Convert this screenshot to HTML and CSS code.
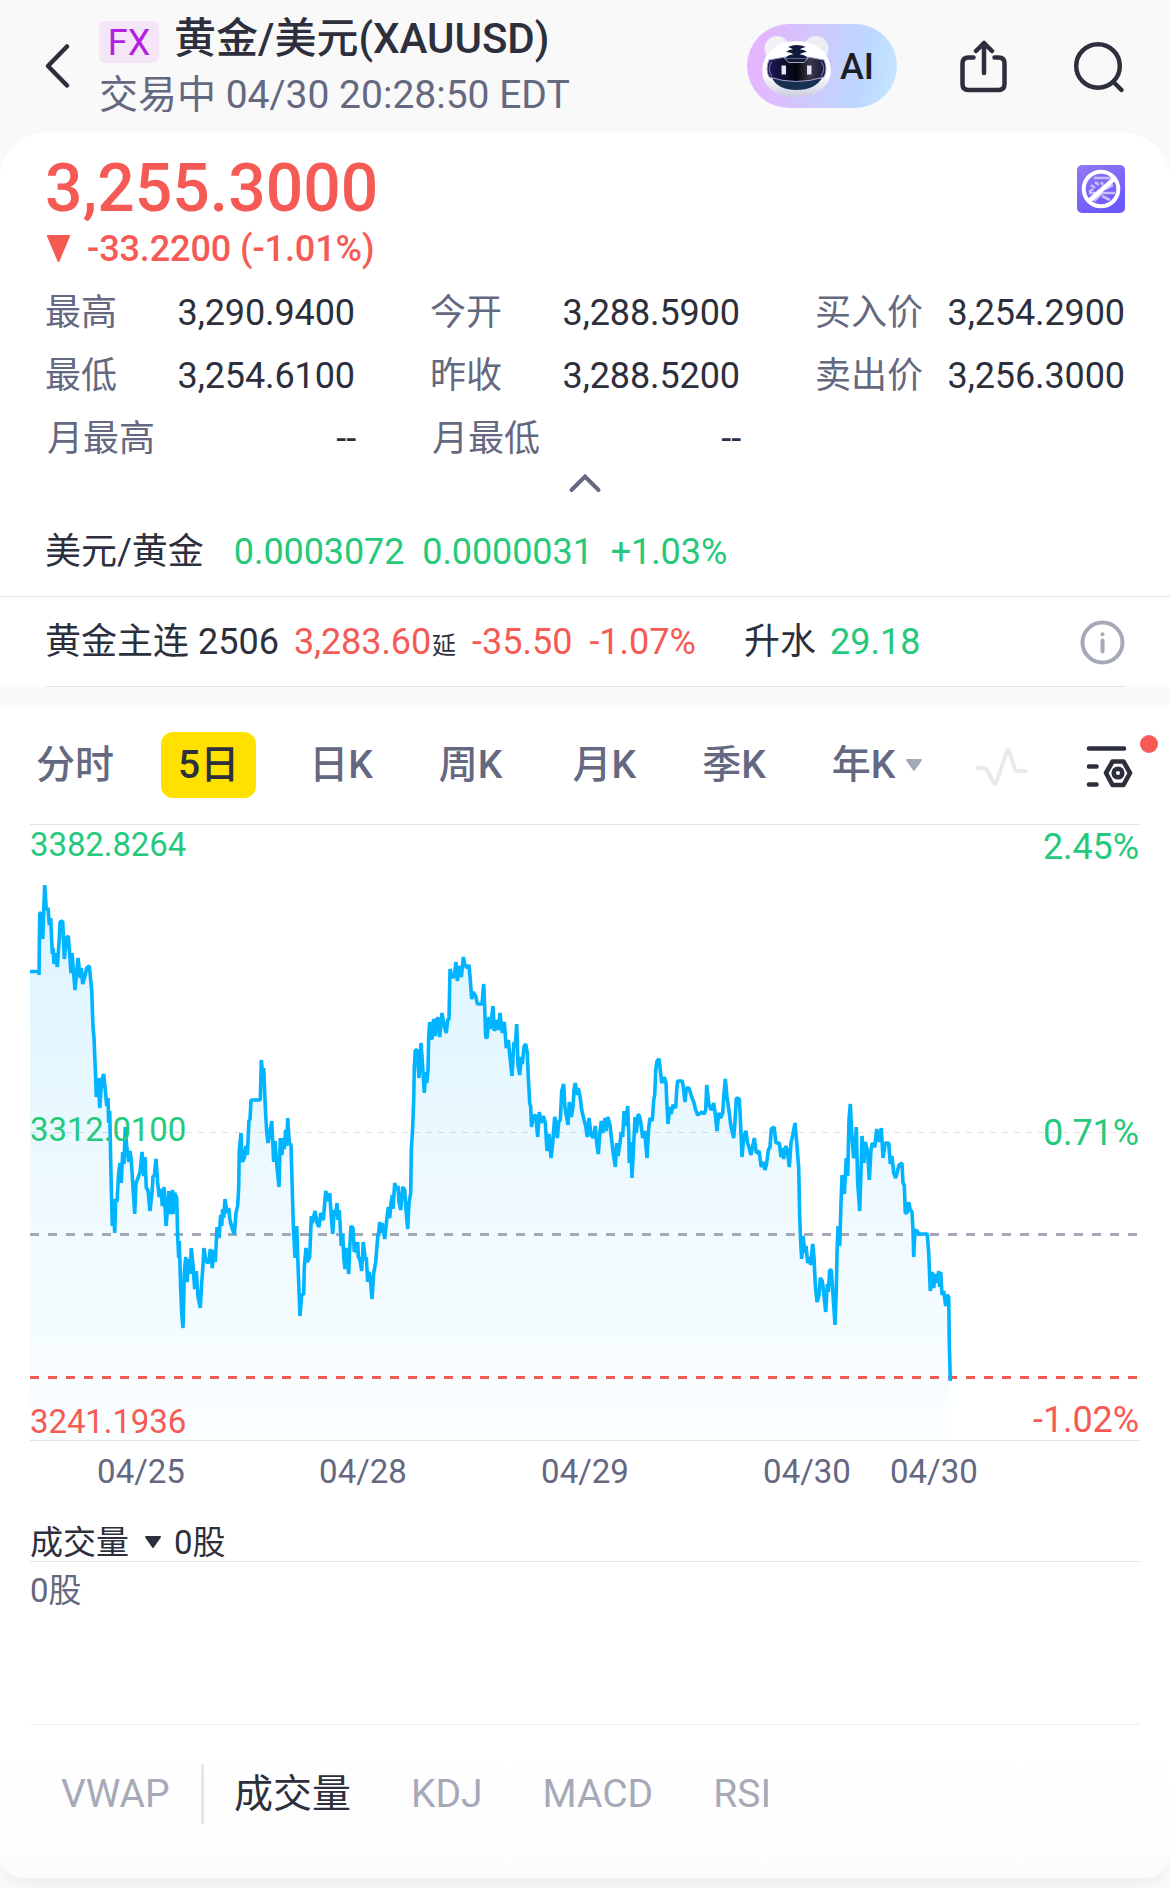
FILE: index.html
```html
<!DOCTYPE html>
<html lang="zh-CN">
<head>
  <meta charset="UTF-8"/>
  <title>黄金/美元(XAUUSD)</title>
  <link rel="stylesheet" href="styles.css">
</head>
<body>

  <!-- HEADER -->
  <div class="header">
    <svg class="back" width="30" height="50" viewBox="0 0 30 50"><path d="M25 5.500L6 25L25 44.500"/></svg>
    <div class="heading">
      <div class="title"><span class="tag">FX</span><h1>黄金/美元(XAUUSD)</h1></div>
      <div class="status">交易中 04/30 20:28:50 EDT</div>
    </div>
    <div class="ai">
      <svg width="94" height="84" viewBox="0 0 94 84">
        <defs>
          <linearGradient id="fur" x1="0" y1="0" x2="0" y2="1">
            <stop offset="0.6" stop-color="#fff"/>
            <stop offset="1" stop-color="#c9cbe0"/>
          </linearGradient>
          <linearGradient id="visor" x1="0" y1="0" x2="1" y2="0">
            <stop offset="0" stop-color="#1e1b5a"/>
            <stop offset="0.5" stop-color="#05050f"/>
            <stop offset="0.72" stop-color="#3a3a48"/>
            <stop offset="1" stop-color="#14123c"/>
          </linearGradient>
        </defs>
        <circle cx="30" cy="24.500" r="12.500" fill="#f2f1f5"/>
        <circle cx="69" cy="24.500" r="12.500" fill="#eeedf2"/>
        <path d="M49.500 17C69 17 83.700 29 83.700 47C83.700 64 68 73.500 49.500 73.500S15.300 64 15.300 47C15.300 29 30 17 49.500 17Z" fill="url(#fur)"/>
        <path d="M25 54Q49.500 59 75 54Q68 66 49.500 66T25 54Z" fill="#17304f"/>
        <path d="M22 36Q49.500 29 77 36Q81 45 77 53Q49.500 62 22 53Q18 45 22 36Z" fill="url(#visor)" stroke="#a9a0d0" stroke-width="1"/>
        <path d="M24.500 38Q20 45 24.500 51.500M74.500 38Q79 45 74.500 51.500" fill="none" stroke="#7775a8" stroke-width="1.200"/>
        <path d="M38 34L61 34L57 38.500H42Z" fill="#101b3c" stroke="#cfcbea" stroke-width="0.800"/>
        <path d="M41 23Q49.500 19 59 23Q54 24 53 25.500Q57 25 60 28Q54 28.500 53 30.500Q58 30.500 60.500 34H38.500Q41 30.500 46 30.500Q45 28.500 39 28Q42 25 46 25.500Q45 24 41 23Z" fill="#101b3c"/>
        <path d="M34.500 41.500h4.500v9h-4.500zM60 41.500h4.500v9h-4.500z" fill="#e6e6ee"/>
      </svg>
      <span>AI</span>
    </div>
    <svg class="share" width="50" height="54" viewBox="0 0 50 54"><path d="M14.500 17.500H9.500Q3.500 17.500 3.500 23.500V44Q3.500 50 9.500 50H39.500Q45.500 50 45.500 44V23.500Q45.500 17.500 39.500 17.500H35.500M25 33V3M17 11L25 3L33 11"/></svg>
    <svg class="search" width="54" height="54" viewBox="0 0 54 54"><circle cx="25" cy="26" r="21.800"/><path d="M41 42.500L48.500 50"/></svg>
  </div>

  <!-- QUOTE -->
  <div class="quote">
    <div class="price-row">
      <div class="price">3,255.3000</div>
      <svg class="badge" width="48" height="48" viewBox="0 0 48 48">
        <defs>
          <linearGradient id="badge" x1="0" y1="0" x2="0.500" y2="1">
            <stop offset="0" stop-color="#9479f3"/>
            <stop offset="1" stop-color="#6a59fb"/>
          </linearGradient>
        </defs>
        <rect width="48" height="48" rx="5" fill="url(#badge)"/>
        <path d="M17 13H34M14 20L18 23M18 17L22 20M12 27L16 24M24 17L26 20M12 28H38M25 28L17 36M25 31L33 35M28 24L36 20" fill="none" stroke="#cbbdfb" stroke-width="2.600"/>
        <circle cx="24" cy="24" r="17.300" fill="none" stroke="#fff" stroke-width="4"/>
        <path d="M12 36L37 14" stroke="#fff" stroke-width="4.500"/>
      </svg>
    </div>
    <div class="change"><svg width="25" height="28" viewBox="0 0 25 28"><path d="M2 1H23L12.500 26Z" fill="#f55a55" stroke="#f55a55" stroke-width="2" stroke-linejoin="round"/></svg>-33.2200 (-1.01%)</div>
    <div class="stats">
      <div><span>最高</span><b>3,290.9400</b></div>
      <div><span>今开</span><b>3,288.5900</b></div>
      <div><span>买入价</span><b>3,254.2900</b></div>
      <div><span>最低</span><b>3,254.6100</b></div>
      <div><span>昨收</span><b>3,288.5200</b></div>
      <div><span>卖出价</span><b>3,256.3000</b></div>
      <div class="month"><span>月最高</span><b>--</b></div>
      <div class="month"><span>月最低</span><b>--</b></div>
    </div>
    <svg class="fold" width="36" height="36" viewBox="0 0 36 36"><path d="M4.500 19L18 5.500L31.500 19"/></svg>
  </div>

  <!-- RELATED QUOTES -->
  <div class="related inverse">
    <span class="name">美元/黄金</span>
    <span class="up">0.0003072</span>
    <span class="up">0.0000031</span>
    <span class="up">+1.03%</span>
  </div>
  <div class="related futures">
    <span>黄金主连 2506</span>
    <span class="down last">3,283.60</span><small>延</small>
    <span class="down">-35.50</span>
    <span class="down pct">-1.07%</span>
    <span class="basis">升水</span>
    <span class="up">29.18</span>
    <svg class="info" width="46" height="46" viewBox="0 0 46 46"><circle cx="23.500" cy="23.500" r="20"/><path d="M23.500 21.500V32.500"/><path d="M23.500 15.200V15.300"/></svg>
  </div>

  <!-- CHART -->
  <div class="panel">
    <div class="tabs">
      <span>分时</span>
      <span class="active">5日</span>
      <span>日K</span>
      <span>周K</span>
      <span class="month">月K</span>
      <span>季K</span>
      <span class="year">年K</span>
      <svg class="caret" width="18" height="14" viewBox="0 0 18 14"><path d="M2 2H16L9 12Z"/></svg>
      <svg class="pulse" width="56" height="44" viewBox="0 0 56 44"><path d="M4 23H10Q12 23 13.500 26L20 38Q21 40 22 38L33 6Q34 4 35 6L41 24Q42 26 44 26H52"/></svg>
      <svg class="settings" width="52" height="48" viewBox="0 0 52 48"><path d="M5 5.500H40M5 23.500H12.500M5 41.500H12.500"/><path d="M28.500 18.500H39.500L46 30L39.500 42H28.500L22 30Z"/><circle cx="34" cy="30" r="4.300"/></svg>
      <i class="dot"></i>
    </div>

    <div class="chart">
      <svg width="1110" height="617" viewBox="0 0 1110 617">
        <defs>
          <linearGradient id="area" gradientUnits="userSpaceOnUse" x1="0" y1="60" x2="0" y2="616">
            <stop offset="0" stop-color="#dcf4ff"/>
            <stop offset="0.62" stop-color="#f0faff"/>
            <stop offset="1" stop-color="#fafeff"/>
          </linearGradient>
        </defs>
        <polygon id="fill" fill="url(#area)"/>
        <path d="M0 308.500H1110" stroke="#000" stroke-opacity="0.120" stroke-dasharray="6 6"/>
        <path d="M0 410.500H1110" stroke="#a4a9b8" stroke-width="3" stroke-dasharray="9 9"/>
        <path d="M0 553.500H1110" stroke="#f55a55" stroke-width="3" stroke-dasharray="9 9"/>
        <polyline id="line" fill="none" stroke="#00b4ff" stroke-width="3.600" stroke-linejoin="bevel" points="
          0,147.500 9,147.500 9,151 9.700,89 10.700,89 12.700,115 14.700,61 16.300,86 18,84 19.300,101 20.700,94 22.300,130 23,124 24,140 25.700,129 27.300,143 29.300,114 30,98 32.700,97 34.300,135 36.300,114 38.300,112 41,149 42,129 45,166 48,134 50.300,154 51.300,144 52.700,160 54.700,153 56.700,144 59.300,142 61.700,166 63,203 64,214 65.700,254 66.300,273 68.300,254 69.700,284 71.700,256 73.700,250 75.300,266 76.700,282 78,274 78.700,299 79.700,287 80.700,336 81.300,364 82.300,402 83.300,375 84.700,409 85.700,375 87,378 88.700,348 90,339 91.300,359 92.700,328 94,340 95.300,303 96.700,322 98.700,338 100,327 101.300,336 103,364 104.700,390 106,359 108,354 110,348 112,328 113.700,352 115,333 116.300,364 118,366 120,387 122,369 123,352 124.300,352 126,335 127.700,359 129.300,373 131,365 132.300,382 134,363 136,402 137.700,383 138.700,367 140.700,390 142.700,366 143,390 144.700,369 146.700,374 147.700,413 148.700,434 149.300,417 150.700,466 151.700,489 153,504 154.300,449 155.700,433 157,458 158.700,435 160,450 161.300,424 163,441 164.700,465 166.300,447 168,473 170.300,484 171.700,459 173,441 174,424 175.700,436 177.700,439 179,437 180.300,425 182.300,444 183.700,426 185.300,438 187,403 189,414 190.700,391 191.700,402 192.700,385 193.700,394 195,375 197,389 198.700,384 200,396 202,404 204.300,410 206,389 207.700,381 208.700,363 209.300,326 211,309 212.300,338 214.300,334 216,322 217.300,331 219,296 220,296 221,276 230.300,276 231.300,236 233,253 233.700,244 235.300,283 236.700,308 238,319 240,308 241.700,297 243.700,338 245,317 247,343 249,363 250.300,314 252,331 253,314 254.300,325 255.700,306 256.700,322 257.700,294 259.300,319 261,321 262,356 263.300,401 265,434 266.700,402 268.300,449 270,492 271.700,471 273.700,470 274.300,443 276,424 277.300,438 279.700,433
          281.300,392 282.300,399 285,387 287,399 289,403 290.700,389 293.300,396 295.700,367 298,377 299.700,369 301,388 302.700,410 304.300,386 305.700,391 307,379 308,396 309.300,386 311.300,422 312.700,410 313.700,433 315,445 316.700,424 318.700,450 319.700,424 321,402 323,404 324.300,428 325.700,418 326.500,429 327.700,418 328.300,433 329.700,435 331.700,447 333.300,418 335.300,436 336.300,433 337.700,458 339,448 340.300,454 342,475 343.700,449 345.700,438 347.700,413 348.700,408 349.700,398 350.700,409 352,399 354.700,415 356.700,396 358.300,383 359.700,394 361,379 362.300,371 363,385 364.700,359 366.300,366 368,362 369,378 370.700,386 372.700,363 374.700,366 376,386 377.700,405 379,379 380.700,369 381.300,326 382.700,303 383.700,276 384.300,243 385.300,226 387,226 389,254 391,219 392.700,243 394.300,269 395.700,248 396.700,259 398,246 398.700,213 399.700,198 401,214 402,215 403.700,195 405.300,212 406.700,195 408.300,194 409.700,213 412,189 414,201 416.300,209 417.700,196 419,195 420,145 422,153 424.300,153 426,138 427.300,157 429.300,142 431.300,153 433.300,133 434.700,140 436.700,144 439,141 440.300,156 441.700,175 443.300,168 446,173 447.300,180 452,180 453.700,160 454.700,183 455.700,213 457,214 459,193 460.300,205 463,182 464.300,207 466.700,196 468.300,206 470,189 472.300,209 474.300,198 476.300,224 478.300,216 480,233 482,252 484,218 485.300,221 486.700,200 488,241 489.700,251 491.300,233 492.300,240 494,223 495.700,220 497.300,229 498.300,253 499.700,279 500.700,283
          501.500,303 503.300,293 505.700,291 507.700,313 509.300,288 511,299 513.300,292 515.300,299 517,327 519,310 521,334 522.700,319 524.700,293 526,299 527.300,314 528.700,298 530.300,296 531.700,267 533.700,260 535,284 538,301 539.300,278 541.300,293 543,283 544,266 545.300,259 547,271 548.300,264 550.300,274 551.700,286 554,296 555.700,302 557.300,313 559,294 561,311 563.300,314 565.300,302 566.700,319 568.300,330 570,308 571.300,297 573,309 575,294 576,307 577.700,293 580,301 581.300,313 583.300,330 585.300,343 586.700,319 588,332 590,319 591.300,308 592.700,313 594,287 595.300,302 597.700,282 598.700,309 599.300,339 600.700,318 602,354 603.300,328 605,293 606.300,309 608,291 609.300,291 610.700,298 612.700,314 614.700,307 617,334 618.700,304 620,294 622.300,297 623.700,276 624.700,271 625.700,246 627,237 629,235 630.300,246 631.700,259 634.300,253 636,259 636.700,276 638,300 639.700,283 641,290 643,281 645.700,284 646.700,266 647.700,257 652.300,257 653.300,263 655,278 656.300,264 659,264 661.700,273 663.700,278 665.700,286 667.700,291 672,288 674.300,290 675.700,286 676.700,261 679,281 681.300,286 683.700,279 685,288 687,307 688.700,289 690.700,294 692.700,289 693.700,273 695.300,255 697,273 699.300,289 700.700,301 703.700,314 705.300,293 706.300,274 709.300,275 710.300,293 712,333 713.700,313 716,307 717.300,318 719,323 721,331 724.300,314 726.300,329 729,327 731.300,343 733.300,338 735,346 736.700,339 738.300,326 740,323 741.300,305 744,303 746,319 749.300,319 751,333 752,324 753.700,335 755.700,322 757.300,326 759.300,343 761,319 762.700,311
          765,299 766.700,318 768.700,344 769.700,393 770.700,419 771.700,435 773,412 775,429 776,422 777.700,439 779.300,433 780.700,441 782.700,420 784,433 785.300,461 787,478 789,471 790.300,454 792.300,457 794,471 795.700,488 797.300,460 798.300,468 799.700,446 801.300,446 803,471 805,501 806.300,466 807,429 808,402 809.700,422 811,379 812,351 814.300,370 816.300,334 817.700,352 819,296 820.300,280 822,313 823.700,334 825,328 826.300,303 827.700,359 829.700,387 831,346 832,312 834,339 835.300,318 837.700,328 839.300,356 841,326 842.300,319 844.700,323 846.700,305 848.700,318 851.300,304 853,334 855.300,319 858.700,319 860.300,340 862,332 863.700,349 865.700,354 869,341 872,339 873,359 874.300,361 875.300,389 877,389 878.700,378 880.300,386 882,388 883,406 883.700,433 885,406 887,407 888.700,410 897.300,410 898.700,429 900.300,467 902.300,448 903.700,464 905.300,450 907,459 908.700,447 909.700,463 910.700,448 912,471 913.700,467 915.700,482 917,471 918.700,473 919.300,519 920.300,557"/>
      </svg>
      <span class="label top up">3382.8264</span>
      <span class="label mid up">3312.0100</span>
      <span class="label bottom down">3241.1936</span>
      <span class="label pct top up">2.45%</span>
      <span class="label pct mid up">0.71%</span>
      <span class="label pct bottom down">-1.02%</span>
    </div>
    <div class="dates">
      <span>04/25</span><span>04/28</span><span>04/29</span><span>04/30</span><span>04/30</span>
    </div>

    <!-- VOLUME -->
    <div class="volume-head">成交量<svg width="18" height="14" viewBox="0 0 18 14"><path d="M2 2H16L9 12Z"/></svg>0股</div>
    <div class="volume">0股</div>

    <div class="indicators">
      <span class="vwap">VWAP</span>
      <span class="selected">成交量</span>
      <span>KDJ</span>
      <span>MACD</span>
      <span>RSI</span>
    </div>
  </div>

  <script>
    // close the price line down to the bottom axis to get the shaded area
    const pts = document.getElementById('line').getAttribute('points').trim();
    document.getElementById('fill').setAttribute('points', pts + ' 920.3,616 0,616');
  </script>
</body>
</html>
```

FILE: styles.css
```css
/* GLOBAL STYLES */
* {
  margin: 0;
  padding: 0;
  box-sizing: border-box;
}
body {
  width: 1170px;
  height: 1888px;
  overflow: hidden;
  font-family: Roboto, "Noto Sans CJK SC", sans-serif;
  font-size: 36px;
  color: #2d2f3d;
  background: #f9f9f9;
}
svg {
  display: block;
  flex-shrink: 0;
}
.up {
  color: #26c97c;
}
.down {
  color: #f55a55;
}
/* HEADER */
.header {
  display: flex;
  height: 132px;
  padding: 11px 43px 0 42px;
}
.header svg {
  fill: none;
  stroke: #2d2f3d;
  stroke-width: 4.5;
  stroke-linecap: round;
  stroke-linejoin: round;
}
.header .back {
  margin-top: 30px;
}
.heading {
  margin-left: 27px;
  width: 648px;
}
.title {
  display: flex;
  line-height: 56px;
}
.title h1 {
  font-size: 42px;
  font-weight: 500;
}
.tag {
  width: 60px;
  height: 42px;
  margin: 10px 15px 0 0;
  border-radius: 6px;
  background: #f4e6f6;
  color: #b31ee3;
  line-height: 45px;
  text-align: center;
}
.status {
  font-size: 39px;
  line-height: 56px;
  color: #646880;
}
.ai {
  display: flex;
  width: 150px;
  height: 84px;
  margin-top: 13px;
  border-radius: 42px;
  background: linear-gradient(100deg, #e3b6ff 12%, #d0c8fd 42%, #bcd7ff 75%, #c6e9ff 100%);
  color: #1d1e24;
  font-weight: 500;
  line-height: 86px;
}
.header .ai svg {
  margin-right: -1px;
  stroke: none;
}
.header .share {
  margin: 29px 0 0 62px;
}
.header .search {
  margin: 29px 0 0 64px;
}
/* QUOTE */
.quote {
  height: 374px;
  padding: 18px 45px 0;
  border-radius: 48px 48px 0 0;
  background: #fff;
}
.price-row {
  display: flex;
  justify-content: space-between;
  height: 76px;
}
.price {
  font-size: 66px;
  font-weight: 500;
  line-height: 78px;
  color: #f55a55;
}
.badge {
  margin-top: 15px;
}
.change {
  display: flex;
  align-items: center;
  gap: 16px;
  height: 46px;
  padding-left: 1px;
  font-weight: 500;
  line-height: 46px;
  letter-spacing: -0.1px;
  color: #f55a55;
}
.stats {
  display: grid;
  grid-template-columns: repeat(3, 310px);
  column-gap: 75px;
  margin-top: 10px;
  line-height: 63px;
}
.stats div {
  display: flex;
  justify-content: space-between;
}
.stats span {
  color: #646880;
}
.stats b {
  font-weight: 400;
  letter-spacing: -0.1px;
}
.stats .month {
  margin: 0 -1px 0 2px;
}
.fold {
  margin: 0 auto;
  fill: none;
  stroke: #646880;
  stroke-width: 4;
  stroke-linecap: round;
}
/* RELATED QUOTES */
.related {
  display: flex;
  height: 90px;
  padding: 0 45px;
  background: #fff;
  line-height: 90px;
}
.inverse {
  height: 91px;
  border-bottom: 1px solid #e3e4e7;
  gap: 18px;
  line-height: 92px;
}
.inverse .name {
  margin-right: 12px;
}
.inverse .up {
  letter-spacing: -0.1px;
}
.futures {
  border: solid #fff;
  border-width: 0 45px;
  padding: 0;
  box-shadow: inset 0 -1px #e3e4e7;
}
.futures .last {
  margin-left: 15px;
  letter-spacing: -0.1px;
}
.futures small {
  margin: 4px 16px 0 1px;
  font-size: 24px;
}
.futures .pct {
  margin-left: 17px;
}
.futures .basis {
  margin: 0 14px 0 48px;
}
.info {
  margin: 22px 0 0 auto;
  fill: none;
  stroke: #a6aab8;
  stroke-width: 4;
  stroke-linecap: round;
}
/* CHART PANEL */
.panel {
  height: 1173px;
  margin-top: 18px;
  padding: 0 30px;
  border-radius: 0 0 24px 24px;
  background: linear-gradient(#fff 1050px, #fcfcfc);
  box-shadow: 0 12px 14px -6px rgba(0,0,0,0.05);
}
.tabs {
  display: flex;
  gap: 30px;
  height: 119px;
  margin: 0 -30px;
  padding: 27px 0 0 18px;
  font-size: 39px;
  font-weight: 500;
  line-height: 66px;
  color: #646880;
  position: relative;
}
.tabs span {
  height: 66px;
  padding: 0 18px;
  border-radius: 12px;
}
.tabs .active {
  margin: 0 5px 0 -1px;
  padding: 0 17px;
  background: #ffe100;
  color: #2d2f3d;
}
.tabs .month {
  margin-left: 4px;
}
.tabs .year {
  padding-right: 0;
}
.tabs svg {
  fill: none;
  stroke-linecap: round;
  stroke-linejoin: round;
}
.tabs .caret {
  margin: 26px 0 0 -20px;
  fill: #a6aab8;
  stroke: #a6aab8;
  stroke-width: 2;
}
.tabs .pulse {
  margin: 13px 0 0 21px;
  stroke: #e9eaee;
  stroke-width: 4;
}
.tabs .settings {
  margin: 11px 0 0 24px;
  stroke: #2d2f3d;
  stroke-width: 4.6;
}
.dot {
  position: absolute;
  left: 1140px;
  top: 30px;
  width: 18px;
  height: 18px;
  border-radius: 50%;
  background: #f55a55;
}
.chart {
  position: relative;
  height: 617px;
  border-top: 1px solid #e3e4e7;
  border-bottom: 1px solid #e3e4e7;
}
.chart svg {
  margin-top: -1px;
}
/* axis labels lie over the plot */
.label {
  position: absolute;
  left: 0;
  font-size: 33px;
  line-height: 40px;
  letter-spacing: -0.1px;
}
.label.pct {
  left: auto;
  right: 1px;
  font-size: 36px;
}
.label.top {
  top: 0;
}
.label.mid {
  top: 285px;
}
.label.bottom {
  top: 577px;
}
.label.pct.top {
  top: 2px;
}
.label.pct.mid {
  top: 288px;
}
.label.pct.bottom {
  top: 575px;
}
.dates {
  display: flex;
  height: 84px;
  font-size: 33px;
  line-height: 62px;
  color: #646880;
}
.dates span {
  width: 222px;
  text-align: center;
}
.dates span:last-child {
  width: 86px;
  margin-left: -28px;
}
/* VOLUME */
.volume-head {
  display: flex;
  align-items: center;
  height: 37px;
  border-bottom: 1px solid #e3e4e7;
  font-size: 33px;
  line-height: 36px;
}
.volume-head svg {
  margin: -2px 12px 0 15px;
  fill: #2d2f3d;
  stroke: #2d2f3d;
  stroke-width: 2;
  stroke-linejoin: round;
}
.volume {
  height: 163px;
  border-bottom: 1px solid #efeff1;
  font-size: 33px;
  line-height: 58px;
  color: #646880;
}
.indicators {
  display: flex;
  gap: 60px;
  padding: 39px 31px 0;
  font-size: 39px;
  line-height: 60px;
  color: #a6aab8;
}
.indicators .vwap {
  width: 143px;
  border-right: 3px solid #e6e6e8;
  margin-right: -30px;
}
.indicators .selected {
  color: #2d2f3d;
}
```
